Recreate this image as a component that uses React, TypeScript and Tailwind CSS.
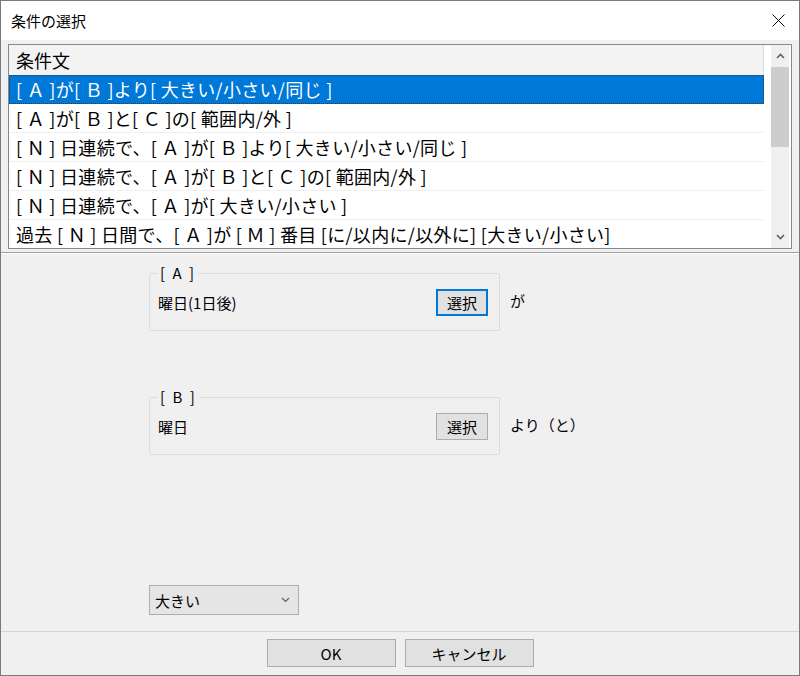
import React from "react";

const rows = [
  "[ Ａ ]が[ Ｂ ]より[ 大きい/小さい/同じ ]",
  "[ Ａ ]が[ Ｂ ]と[ Ｃ ]の[ 範囲内/外 ]",
  "[ Ｎ ] 日連続で、[ Ａ ]が[ Ｂ ]より[ 大きい/小さい/同じ ]",
  "[ Ｎ ] 日連続で、[ Ａ ]が[ Ｂ ]と[ Ｃ ]の[ 範囲内/外 ]",
  "[ Ｎ ] 日連続で、[ Ａ ]が[ 大きい/小さい ]",
  "過去 [ Ｎ ] 日間で、[ Ａ ]が [ Ｍ ] 番目 [に/以内に/以外に] [大きい/小さい]",
];

function Chevron({ up }: { up?: boolean }) {
  return (
    <svg width="9" height="6" viewBox="0 0 9 6">
      <path
        d={up ? "M1 5 L4.5 1.5 L8 5" : "M1 1 L4.5 4.5 L8 1"}
        stroke="#606060"
        strokeWidth="1.6"
        fill="none"
      />
    </svg>
  );
}

function Group({
  label,
  value,
  focused,
  suffix,
}: {
  label: string;
  value: string;
  focused?: boolean;
  suffix: string;
}) {
  return (
    <div className="flex items-start">
      <fieldset className="w-[351px] border border-[#dcdcdc] rounded-[2px] pl-2 pr-[11px] pt-[7px] pb-[14px]">
        <legend className="px-[2px] text-[15px] leading-[18px] tracking-[2px]">
          {label}
        </legend>
        <div className="flex items-center justify-between">
          <span className="text-[15px] leading-[20px]">{value}</span>
          <button
            className={
              focused
                ? "w-[52px] h-[27px] bg-[#e1e1e1] border-2 border-[#0078d7] text-[15px] leading-none"
                : "w-[52px] h-[27px] bg-[#e1e1e1] border border-[#adadad] text-[15px] leading-none"
            }
          >
            選択
          </button>
        </div>
      </fieldset>
      <span className="ml-[10px] mt-[27px] text-[15px] leading-[20px]">{suffix}</span>
    </div>
  );
}

export default function App() {
  return (
    <div className="w-[800px] h-[676px] border border-[#7a7a7a] bg-[#f0f0f0] flex flex-col overflow-hidden text-black font-['Noto_Sans_CJK_JP',sans-serif]">
      {/* title bar */}
      <div className="h-[39px] bg-white flex items-center justify-between pl-[10px] pr-[14px] shrink-0">
        <span className="text-[15px] leading-none">条件の選択</span>
        <svg width="13" height="13" viewBox="0 0 13 13">
          <path d="M0.5 0.5 L12.5 12.5 M12.5 0.5 L0.5 12.5" stroke="#000" strokeWidth="1" />
        </svg>
      </div>

      {/* list */}
      <div className="mt-[4px] mx-[7px] h-[205px] border border-[#828790] bg-white flex shrink-0">
        <div className="w-[755px] flex flex-col overflow-hidden">
          <div className="h-[30px] shrink-0 bg-[#f3f3f3] border-r border-[#dadada] flex items-center pl-[7px] text-[18px]">
            条件文
          </div>
          {rows.map((r, i) => (
            <div
              key={i}
              className={
                i === 0
                  ? "h-[29px] shrink-0 bg-[#0078d7] text-white border border-dotted border-[#3a3a3a] flex items-center pl-[6px] text-[18px] tracking-[0.3px] whitespace-nowrap"
                  : "h-[29px] shrink-0 border-b border-[#f0f0f0] flex items-center pl-[7px] text-[18px] tracking-[0.3px] whitespace-nowrap"
              }
            >
              {r}
            </div>
          ))}
        </div>
        <div className="flex-1" />
        <div className="w-[18px] mr-[2px] bg-[#f0f0f0] flex flex-col items-center">
          <div className="h-[22px] flex items-center justify-center">
            <Chevron up />
          </div>
          <div className="w-full h-[80px] bg-[#cdcdcd]" />
          <div className="flex-1" />
          <div className="h-[22px] flex items-center justify-center">
            <Chevron />
          </div>
        </div>
      </div>

      {/* splitter */}
      <div className="mt-[3px] h-[2px] border-t border-[#a0a0a0] border-b border-b-white shrink-0" />

      {/* conditions */}
      <div className="flex-1 flex flex-col pl-[148px] pt-[10px]">
        <Group label="[ A ]" value="曜日(1日後)" focused suffix="が" />
        <div className="mt-[57px]">
          <Group label="[ B ]" value="曜日" suffix="より（と）" />
        </div>
        <div className="mt-[130px] w-[150px] h-[30px] bg-[#e5e5e5] border border-[#adadad] flex items-center justify-between pl-[5px] pr-[8px]">
          <span className="text-[15px] leading-none">大きい</span>
          <svg width="9" height="6" viewBox="0 0 9 6">
            <path d="M1 1 L4.5 4.5 L8 1" stroke="#606060" strokeWidth="1.2" fill="none" />
          </svg>
        </div>
      </div>

      {/* buttons */}
      <div className="h-[44px] shrink-0 border-t border-[#d5d5d5] flex justify-center gap-[9px] pt-[7px]">
        <button className="w-[129px] h-[28px] bg-[#e1e1e1] border border-[#adadad] text-[15px] leading-none">
          OK
        </button>
        <button className="w-[129px] h-[28px] bg-[#e1e1e1] border border-[#adadad] text-[15px] leading-none">
          キャンセル
        </button>
      </div>
    </div>
  );
}
